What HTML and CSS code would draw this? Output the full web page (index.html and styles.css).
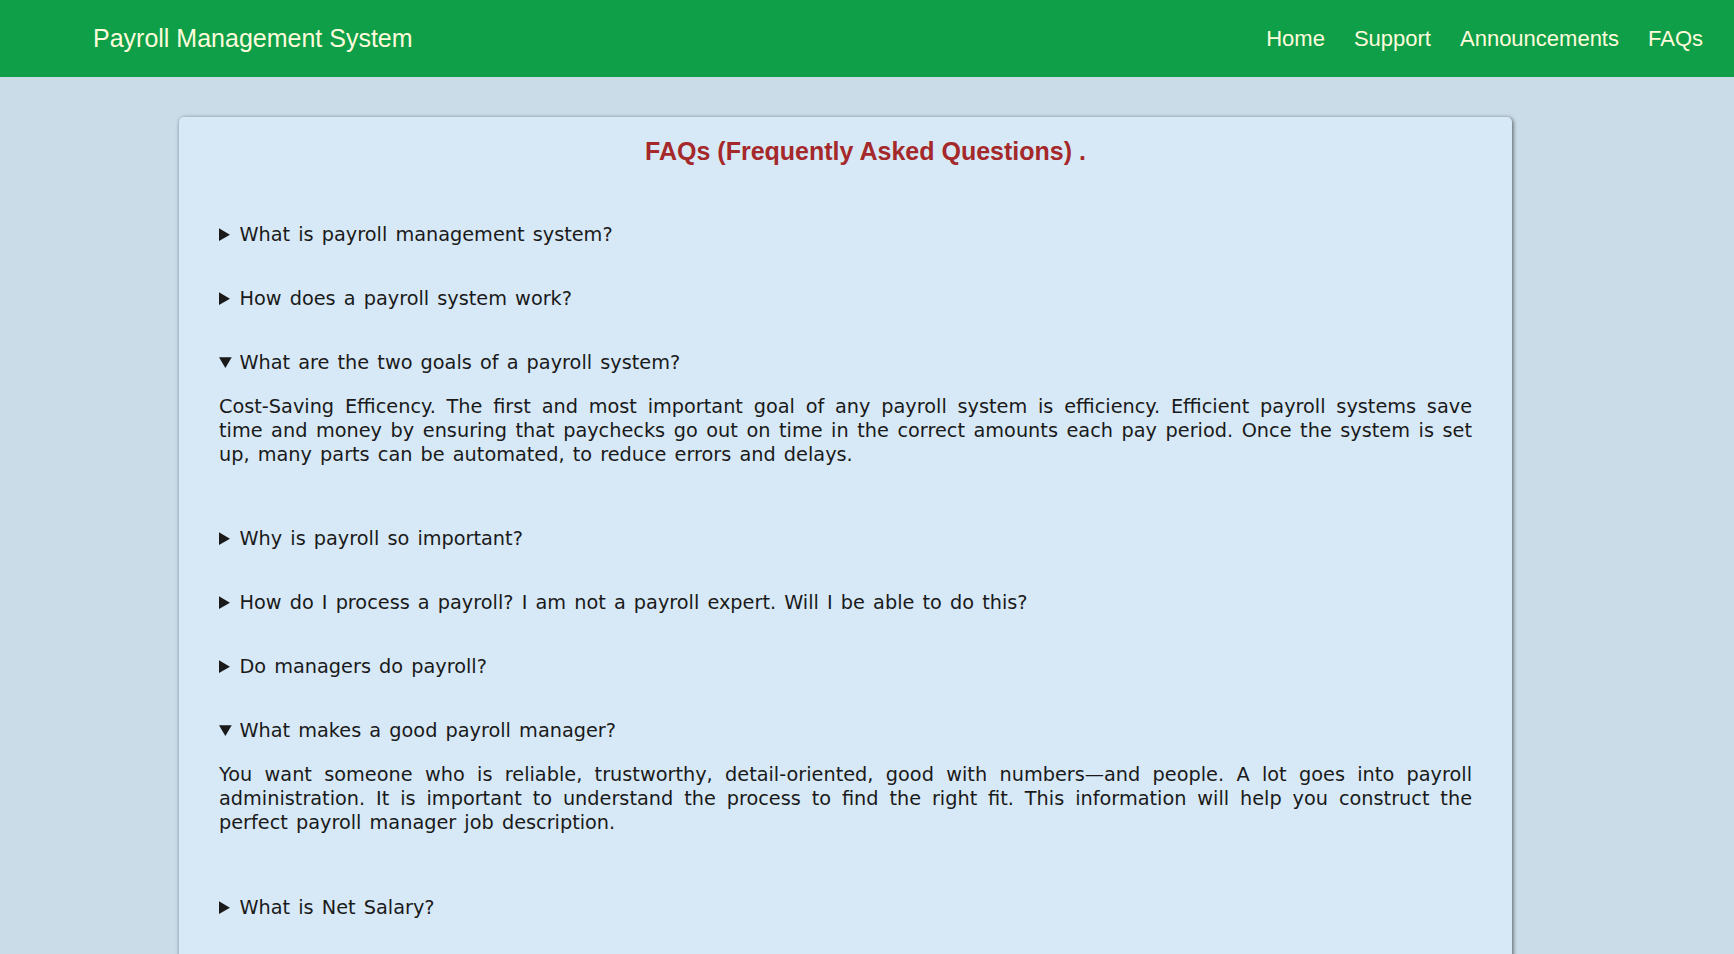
FILE: index.html
```html
<!DOCTYPE html>
<html lang="en">
<head>
<meta charset="utf-8">
<title>FAQs - Payroll Management System</title>
<link rel="stylesheet" href="styles.css">
</head>
<body>
<header class="topbar">
  <div class="brand">Payroll Management System</div>
  <nav class="nav">
    <a href="#" class="nav-link">Home</a>
    <a href="#" class="nav-link">Support</a>
    <a href="#" class="nav-link">Announcements</a>
    <a href="#" class="nav-link">FAQs</a>
  </nav>
</header>
<main class="main">
  <section class="card">
    <h2 class="card-title">FAQs (Frequently Asked Questions) .</h2>
    <details class="faq">
      <summary class="faq-q">What is payroll management system?</summary>
    </details>
    <details class="faq">
      <summary class="faq-q">How does a payroll system work?</summary>
    </details>
    <details class="faq" open>
      <summary class="faq-q">What are the two goals of a payroll system?</summary>
      <p class="faq-a">Cost-Saving Efficency. The first and most important goal of any payroll system is efficiency. Efficient payroll systems save time and money by ensuring that paychecks go out on time in the correct amounts each pay period. Once the system is set up, many parts can be automated, to reduce errors and delays.</p>
    </details>
    <details class="faq">
      <summary class="faq-q">Why is payroll so important?</summary>
    </details>
    <details class="faq">
      <summary class="faq-q">How do I process a payroll? I am not a payroll expert. Will I be able to do this?</summary>
    </details>
    <details class="faq">
      <summary class="faq-q">Do managers do payroll?</summary>
    </details>
    <details class="faq" open>
      <summary class="faq-q">What makes a good payroll manager?</summary>
      <p class="faq-a">You want someone who is reliable, trustworthy, detail-oriented, good with numbers—and people. A lot goes into payroll administration. It is important to understand the process to find the right fit. This information will help you construct the perfect payroll manager job description.</p>
    </details>
    <details class="faq">
      <summary class="faq-q">What is Net Salary?</summary>
    </details>
  </section>
</main>
</body>
</html>
```
FILE: styles.css
```css
html, body {
  margin: 0;
  padding: 0;
}
body {
  background: #cbdce9;
  font-family: "DejaVu Sans", Verdana, sans-serif;
}
.topbar {
  display: flex;
  align-items: center;
  justify-content: space-between;
  height: 77px;
  background: #0e9f48;
  padding: 0 16px 0 93px;
  box-sizing: border-box;
}
.brand {
  font-family: "Liberation Sans", Arial, sans-serif;
  font-size: 25px;
  color: #fffbdc;
}
.nav {
  display: flex;
}
.nav-link {
  font-family: "Liberation Sans", Arial, sans-serif;
  font-size: 22px;
  color: #fffbdc;
  text-decoration: none;
  padding: 0 14.5px;
}
.nav-link:last-child {
  padding-right: 15px;
}
.main {
  padding: 40px 0 40px 179px;
}
.card {
  width: 1333px;
  box-sizing: border-box;
  background: #d7e9f7;
  border-radius: 5px;
  box-shadow: 1px 1px 4px rgba(0, 0, 0, 0.6);
  padding: 20px 40px 60px;
}
.card-title {
  margin: 0 0 37px;
  padding-left: 40px;
  text-align: center;
  font-family: "Liberation Sans", Arial, sans-serif;
  font-size: 25px;
  font-weight: bold;
  color: #a5282a;
}
.faq {
  padding: 21px 0;
  color: #1a1a1a;
  font-size: 19.3px;
  word-spacing: 2px;
}
.faq-q {
  line-height: 22px;
  cursor: pointer;
}
.faq-a {
  margin: 21px 0 20px;
  line-height: 23.8px;
  text-align: justify;
}
```
